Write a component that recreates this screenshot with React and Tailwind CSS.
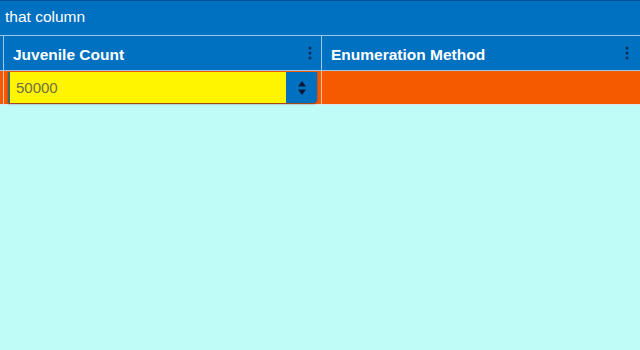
const Dots = () => (
  <svg width="4" height="14" viewBox="0 0 4 14" className="shrink-0">
    <circle cx="2" cy="2" r="1.5" fill="#10305a" />
    <circle cx="2" cy="7" r="1.5" fill="#10305a" />
    <circle cx="2" cy="12" r="1.5" fill="#10305a" />
  </svg>
);

const App = () => {
  return (
    <div className="w-[640px] h-[350px] bg-[#bffcf7] overflow-hidden font-['Liberation_Sans',Arial,sans-serif]">
      {/* top caption bar */}
      <div className="h-[35px] bg-[#0070c0] border-t border-[#00509a] flex items-center pl-[5px] pb-[2px] text-white text-[15.5px]">
        that column
      </div>
      <div className="h-px bg-[#9cc8ea]" />

      {/* header row */}
      <div className="flex h-[34px] bg-[#0070c0]">
        <div className="w-[3px]" />
        <div className="w-px bg-[#9cc8ea]" />
        <div className="w-[317px] flex items-center justify-between pl-[9px] pr-[9px]">
          <span className="text-white text-[15.5px] font-bold pt-[3px]">Juvenile Count</span>
          <Dots />
        </div>
        <div className="w-px bg-[#9cc8ea]" />
        <div className="flex-1 flex items-center justify-between pl-[9px] pr-[11px]">
          <span className="text-white text-[15.5px] font-bold pt-[3px]">Enumeration Method</span>
          <Dots />
        </div>
      </div>
      <div className="h-px bg-[#9cc8ea]" />

      {/* data row */}
      <div className="flex h-[33px] bg-[#f55a00]">
        <div className="w-[3px]" />
        <div className="w-px bg-[#f4c4a8]" />
        <div className="w-[317px] pl-[4px] pr-[4px] pt-px">
          <div className="flex h-[31px] border-l-2 border-[#3f6a6a] rounded-br-[4px] shadow-[0_1px_2px_rgba(0,40,60,0.45)] overflow-hidden">
            <div className="flex-1 bg-[#fff500] flex items-center pl-[6px] pt-[2px] text-[15px] text-[#6f6f4a]">
              50000
            </div>
            <div className="w-[31px] bg-[#0070c0] flex items-center justify-center">
              <svg width="10" height="16" viewBox="0 0 10 16">
                <path d="M5 1 L9 6.5 L1 6.5 Z" fill="#0a1a33" />
                <path d="M1 9.5 L9 9.5 L5 15 Z" fill="#0a1a33" />
              </svg>
            </div>
          </div>
        </div>
        <div className="w-px bg-[#f4c4a8]" />
        <div className="flex-1" />
      </div>
      <div className="h-px bg-[#d8e8ec]" />
    </div>
  );
};

export default App;
